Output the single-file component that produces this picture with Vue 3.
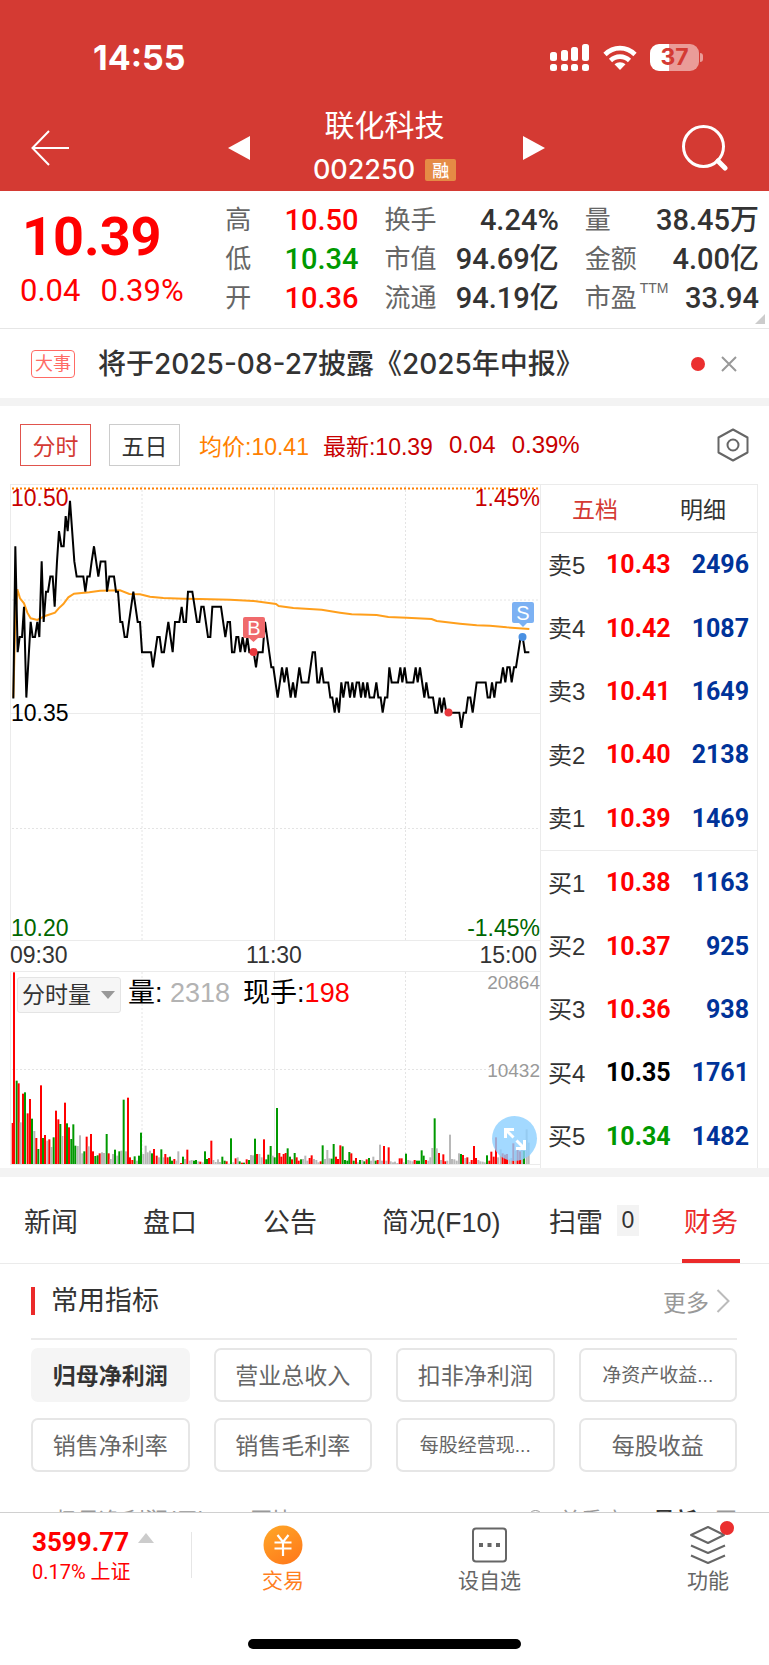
<template>
  <div class="page">
    <header class="header">
      <div class="status-bar">
        <span class="status-time">14:55</span>
        <div class="status-icons">
          <svg width="40" height="28" viewBox="0 0 40 28" fill="#fff">
            <rect x="0" y="8" width="7" height="9" rx="2.5" />
            <rect x="11" y="6" width="7" height="11" rx="2.5" />
            <rect x="21" y="3" width="7" height="14" rx="2.5" />
            <rect x="32" y="0" width="7" height="17" rx="2.5" />
            <rect x="0" y="20" width="7" height="7" rx="2.5" />
            <rect x="11" y="20" width="7" height="7" rx="2.5" />
            <rect x="21" y="20" width="7" height="7" rx="2.5" />
            <rect x="32" y="20" width="7" height="7" rx="2.5" />
          </svg>
          <svg width="34" height="26" viewBox="0 0 34 26" fill="none" stroke="#fff" stroke-width="4.6">
            <path d="M2 9.5C10.500 1 23.500 1 32 9.500" />
            <path d="M7.500 15.500C13 10.300 21 10.300 26.500 15.500" />
            <path d="M17 25L11.500 19.300C14.600 16.600 19.400 16.600 22.500 19.300Z" fill="#fff" stroke="none" />
          </svg>
          <div class="battery">
            <span class="battery-text">37</span>
          </div>
        </div>
      </div>
      <nav class="nav">
        <button class="icon-button" aria-label="返回">
          <svg width="38" height="36" viewBox="0 0 38 36" fill="none" stroke="#fff" stroke-width="2">
            <path d="M18 1L1.500 18L18 35M1.500 18H38" />
          </svg>
        </button>
        <div class="nav-center">
          <button class="icon-button" aria-label="上一只">
            <svg width="22" height="24" viewBox="0 0 22 24"><path d="M0 12L22 0V24Z" fill="#fff" /></svg>
          </button>
          <div class="nav-title">
            <h1 class="stock-name">联化科技</h1>
            <div class="stock-code">002250<span class="margin-tag">融</span></div>
          </div>
          <button class="icon-button" aria-label="下一只">
            <svg width="22" height="24" viewBox="0 0 22 24"><path d="M22 12L0 0V24Z" fill="#fff" /></svg>
          </button>
        </div>
        <button class="icon-button nav-search" aria-label="搜索">
          <svg width="46" height="46" viewBox="0 0 46 46" fill="none" stroke="#fff">
            <circle cx="21.500" cy="21.500" r="20" stroke-width="3" />
            <path d="M36 36L43 43" stroke-width="5" stroke-linecap="round" />
          </svg>
        </button>
      </nav>
    </header>

    <section class="quote">
      <div class="quote-main">
        <div class="quote-price">10.39</div>
        <div class="quote-change"><span>0.04</span><span>0.39%</span></div>
      </div>
      <dl v-for="(col, i) in quoteColumns" :key="i" class="quote-column">
        <div v-for="item in col" :key="item.label" class="quote-item">
          <dt>{{ item.label }}<sup v-if="item.sup">{{ item.sup }}</sup></dt>
          <dd :class="item.color">{{ item.value }}</dd>
        </div>
      </dl>
      <i class="quote-corner"></i>
    </section>

    <section class="notice">
      <span class="notice-tag">大事</span>
      <a href="#" class="notice-text">将于2025-08-27披露《2025年中报》</a>
      <i class="notice-dot"></i>
      <button class="icon-button" aria-label="关闭">
        <svg width="16" height="16" viewBox="0 0 16 16" stroke="#999" stroke-width="2">
          <path d="M1 1L15 15M15 1L1 15" />
        </svg>
      </button>
    </section>

    <section class="toolbar">
      <div class="periods">
        <button class="active">分时</button>
        <button>五日</button>
      </div>
      <span class="toolbar-avg">均价:10.41</span>
      <span class="toolbar-last">最新:10.39</span>
      <span class="toolbar-last toolbar-change">0.04</span>
      <span class="toolbar-last toolbar-change">0.39%</span>
      <button class="icon-button toolbar-setting" aria-label="设置">
        <svg width="32" height="34" viewBox="0 0 32 34" fill="none" stroke="#666" stroke-width="2">
          <path d="M16 1.500L30.500 9.500V24.500L16 32.500L1.500 24.500V9.500Z" stroke-linejoin="round" />
          <circle cx="16" cy="17" r="5.500" />
        </svg>
      </button>
    </section>

    <section class="market">
      <div class="chart">
        <svg class="chart-svg" viewBox="0 0 530 684">
          <g class="grid-line">
            <path d="M0.500 0V456.500H530M0 0.500H530M264.500 0V456M0 229.500H530" />
            <path d="M0.500 680.500V487.500H530M264.500 488V680M0 680.500H530" />
            <path class="dotted" d="M132 2V456M395.500 2V456M2 116H530M2 344.500H530" />
            <path class="dotted" d="M132 488V680M395.500 488V680M2 585.500H530" />
          </g>
          <path class="limit-line" d="M2 4.500H530" />
          <rect
            v-for="bar in bars"
            :key="bar.x"
            :class="'bar-' + bar.type"
            :x="bar.x"
            :y="680 - bar.h"
            width="2"
            :height="bar.h"
          />
          <polyline class="avg-line" :points="avgLine" />
          <polyline class="price-line" :points="priceLine" />

          <circle cx="243.500" cy="168" r="4" fill="#e8383d" />
          <path d="M235 133H253a2 2 0 0 1 2 2V152a2 2 0 0 1-2 2H248L243.500 158L239 154H235a2 2 0 0 1-2-2V135a2 2 0 0 1 2-2Z" fill="#f06a6c" />
          <text class="marker-text" x="244" y="151">B</text>
          <circle cx="438.500" cy="228.500" r="4" fill="#e8383d" />
          <circle cx="512.500" cy="153" r="4" fill="#4a90e2" />
          <path d="M504 118H522a2 2 0 0 1 2 2V137a2 2 0 0 1-2 2H517L513 143L509 139H504a2 2 0 0 1-2-2V120a2 2 0 0 1 2-2Z" fill="#7cb1f3" />
          <text class="marker-text" x="513" y="136">S</text>

          <text class="axis up" x="1" y="22">10.50</text>
          <text class="axis up end" x="530" y="22">1.45%</text>
          <text class="axis flat" x="1" y="237">10.35</text>
          <text class="axis down" x="1" y="452">10.20</text>
          <text class="axis down end" x="530" y="452">-1.45%</text>
          <text class="axis time" x="0" y="479">09:30</text>
          <text class="axis time middle" x="264" y="479">11:30</text>
          <text class="axis time end" x="527" y="479">15:00</text>
          <text class="volume-axis end" x="530" y="505">20864</text>
          <text class="volume-axis end" x="530" y="593">10432</text>
        </svg>
        <div class="volume-head">
          <div class="volume-select">
            <select aria-label="副图指标">
              <option>分时量</option>
            </select>
            <i class="select-arrow"></i>
          </div>
          <span class="volume-text">量: <em>2318</em></span>
          <span class="volume-text">现手:<b>198</b></span>
        </div>
        <button class="expand" aria-label="放大">
          <svg width="24" height="24" viewBox="0 0 24 24" fill="none" stroke="#fff" stroke-width="3">
            <path d="M2.500 11V2.500H11M3 3L10.500 10.500M21.500 13V21.500H13M21 21L13.500 13.500" />
          </svg>
        </button>
      </div>
      <div class="book">
        <div class="book-tabs">
          <button class="active">五档</button>
          <button>明细</button>
        </div>
        <table class="book-table">
          <tbody v-for="(group, g) in book" :key="g">
            <tr v-for="row in group" :key="row[0]">
              <th scope="row">{{ row[0] }}</th>
              <td :class="row[3]">{{ row[1] }}</td>
              <td class="book-volume">{{ row[2] }}</td>
            </tr>
          </tbody>
        </table>
      </div>
    </section>

    <nav class="tabs">
      <a v-for="tab in tabs" :key="tab.name" href="#" :class="{ active: tab.active }">
        {{ tab.name }}<span v-if="tab.badge" class="tab-badge">{{ tab.badge }}</span>
      </a>
    </nav>

    <section class="finance">
      <div class="finance-head">
        <h2>常用指标</h2>
        <a href="#" class="more">更多
          <svg width="14" height="24" viewBox="0 0 14 24" fill="none" stroke="#bbb" stroke-width="2">
            <path d="M1.500 1L12.500 12L1.500 23" />
          </svg>
        </a>
      </div>
      <div class="indicators">
        <button
          v-for="item in indicators"
          :key="item"
          :class="{ active: item === '归母净利润', small: item.endsWith('...') }"
        >{{ item }}</button>
      </div>
      <div class="finance-row">
        <span class="row-name">归母净利润(元)</span>
        <span class="row-compare">同比</span>
        <span class="row-radio"></span>
        <span class="row-season">单季度</span>
        <strong>最新</strong>
        <span class="row-last">同</span>
      </div>
    </section>

    <footer class="footer">
      <div class="footer-bar">
        <div class="index">
          <div class="index-value">3599.77<i class="index-arrow"></i></div>
          <div class="index-name">0.17% 上证</div>
        </div>
        <button class="action trade">
          <svg width="40" height="40" viewBox="0 0 40 40">
            <defs>
              <linearGradient id="coin" x1="0" y1="0" x2="0.600" y2="1">
                <stop offset="0" stop-color="#ffa827" />
                <stop offset="1" stop-color="#ff7d1c" />
              </linearGradient>
            </defs>
            <circle cx="20" cy="20" r="19.500" fill="url(#coin)" />
            <path d="M14.500 10L20 17L25.500 10M11.500 17.500H28.500M11.500 23.500H28.500M20 17V31" fill="none" stroke="#fff" stroke-width="2.200" />
          </svg>
          <span>交易</span>
        </button>
        <button class="action">
          <svg width="40" height="40" viewBox="0 0 40 40">
            <rect x="3" y="3.500" width="33" height="33" rx="3" fill="none" stroke="#666" stroke-width="2" />
            <path d="M9 18h4v4H9zM17.500 18h4v4h-4zM26 18h4v4h-4z" fill="#666" />
          </svg>
          <span>设自选</span>
        </button>
        <button class="action more-action">
          <svg width="40" height="40" viewBox="0 0 40 40" fill="none" stroke="#666" stroke-width="2" stroke-linejoin="round">
            <path d="M20 2L36 10L20 18L3 10Z" />
            <path d="M3 20.500L20 28L37 20.500M3 30.500L20 38L37 30.500" />
          </svg>
          <i class="action-dot"></i>
          <span>功能</span>
        </button>
      </div>
      <div class="home-indicator"></div>
    </footer>
  </div>
</template>

<script setup>
const quoteColumns = [
  [
    { label: '高', value: '10.50', color: 'red' },
    { label: '低', value: '10.34', color: 'green' },
    { label: '开', value: '10.36', color: 'red' }
  ],
  [
    { label: '换手', value: '4.24%' },
    { label: '市值', value: '94.69亿' },
    { label: '流通', value: '94.19亿' }
  ],
  [
    { label: '量', value: '38.45万' },
    { label: '金额', value: '4.00亿' },
    { label: '市盈', value: '33.94', sup: 'TTM' }
  ]
]

const book = [
  [
    ['卖5', '10.43', 2496, 'red'],
    ['卖4', '10.42', 1087, 'red'],
    ['卖3', '10.41', 1649, 'red'],
    ['卖2', '10.40', 2138, 'red'],
    ['卖1', '10.39', 1469, 'red']
  ],
  [
    ['买1', '10.38', 1163, 'red'],
    ['买2', '10.37', 925, 'red'],
    ['买3', '10.36', 938, 'red'],
    ['买4', '10.35', 1761, 'black'],
    ['买5', '10.34', 1482, 'green']
  ]
]

const tabs = [
  { name: '新闻' },
  { name: '盘口' },
  { name: '公告' },
  { name: '简况(F10)' },
  { name: '扫雷', badge: '0' },
  { name: '财务', active: true }
]

const indicators = [
  '归母净利润', '营业总收入', '扣非净利润', '净资产收益...',
  '销售净利率', '销售毛利率', '每股经营现...', '每股收益'
]

// time position, cents above or below the previous close (10.35)
const prices = `37,1 40,1 46,11 53,4 59,5 66,5 72,7 79,1 92,6 98,5 105,5 112,6 118,5 125,10 131,6 138,8 144,8
  151,9 158,9 164,7 171,10 177,12 184,11 191,11 197,13 203,12 210,14 223,10 230,9 250,9 256,8 262,9 269,9 275,10
  282,11 295,9 302,10 316,10 321,8 328,9 342,9 348,8 354,8 361,6 367,6 374,5 381,5 387,6 400,8 413,6 420,6 426,4
  453,4 459,3 472,5 479,5 485,4 492,4 505,6 518,4 525,6 538,6 545,7 551,6 558,6 564,8 577,8 591,6 598,6 604,7
  611,7 624,5 631,5 637,7 663,7 676,5 683,6 690,6 696,4 703,4 709,5 715,5 721,4 728,5 735,4 742,5 748,4 761,4
  768,3 774,4 788,4 795,6 814,3 820,3 833,1 846,3 853,2 860,3 872,1 879,2 886,1 898,3 905,2 925,2 938,4 945,4
  952,2 958,2 965,3 971,2 985,2 991,1 997,1 1004,0 1010,1 1017,0 1024,2 1030,1 1037,2 1044,2 1050,1 1057,2
  1063,1 1070,2 1077,2 1083,1 1089,2 1096,1 1102,2 1109,1 1122,1 1129,2 1135,1 1142,1 1148,0 1155,1 1162,1
  1168,3 1175,2 1194,2 1201,3 1207,2 1214,3 1220,2 1240,2 1247,3 1253,2 1260,3 1273,1 1279,2 1286,1 1299,1
  1306,0 1312,0 1319,1 1325,0 1332,1 1339,0 1378,0 1384,-1 1391,0 1398,0 1404,1 1411,1 1418,0 1430,2 1457,2
  1463,1 1470,1 1476,2 1483,1 1489,2 1502,2 1509,3 1516,2 1522,3 1529,3 1535,2 1542,3 1548,3 1562,5 1568,5
  1575,4 1588,4`

const averages = `40,653 46,420 52,328 60,355 72,370 82,398 92,415 112,420 135,408 165,398 176,385 190,372 205,352
  222,341 268,337 300,332 360,331 388,342 420,343 450,350 490,354 550,356 600,357 690,359 760,363 828,372 836,378
  880,384 965,389 1020,398 1055,403 1130,405 1165,411 1220,413 1295,417 1310,423 1380,431 1430,436 1470,437
  1520,442 1588,447`

// time position, r up / g down / n flat, volume
const volumes = `38r123 42r575 50g250 56r242 62n125 69r211 75g215 83r152 90r195 96g136 103n99 109r78 115g45 123r236
  129g78 135r87 142n70 148r74 154n51 161g80 168r160 175r134 181g120 187n84 195r184 201g122 207r110 214g75 220g119
  226g55 233n54 240n86 247n32 253g38 260r82 266n53 273r90 279r38 286g24 293g26 299r32 306n35 312n33 320g90 326r32
  332n15 339n30 345g43 352n25 358g38 364n40 371g193 378n38 384r199 390r20 397r12 404g23 411n10 417g25 423g94
  430n30 437n55 443n35 450n40 456g32 462r45 470r25 477n20 484g44 490n20 496r30 503r20 510g22 516g10 523r15 529n10
  535n38 543r3 549g22 555n15 562r43 569n10 575n12 582g10 588g12 595n8 601r7 608n5 615g38 621g15 627r18 634r70
  640n12 647n6 654n14 660n6 667g22 674g10 680r8 686n1 693g77 700n5 707r17 713n20 719g8 726r4 732g4 740r14 747g12
  753n27 759n26 765g76 771r30 778n30 785n20 792r74 799g14 805g28 812g54 818n25 824g20 831g168 838r33 844r22
  851r30 857r33 863g47 870g22 876r14 884g33 890r20 896r10 903g14 909n15 916n25 922n10 929r18 935r26 942n15 949n12
  955n5 962r8 968g56 975n15 982n42 988n17 995g16 1001g60 1008r22 1014r15 1021r56 1028g53 1035g12 1042g10 1048g36
  1054r32 1061g10 1068r18 1074n5 1080g12 1087n12 1093g8 1100r14 1107g18 1113n10 1120n22 1127g10 1133r12 1140n58
  1146n10 1152r54 1159n10 1166r50 1172n8 1179n5 1185n7 1192n3 1199r17 1205r17 1211n5 1218g31 1225n12 1231n10
  1238n8 1244r12 1251g10 1257g10 1265g41 1271g25 1278r12 1285n10 1291n20 1297n48 1304g137 1310n47 1317r33 1323n12
  1330r29 1336r8 1342n10 1350n88 1356n15 1363n14 1370n10 1377n32 1383g30 1389r27 1396n18 1402r20 1408n6 1415r12
  1422r54 1428r18 1435n12 1441n8 1448n7 1454n5 1461g26 1468r10 1474r37 1481r22 1488r80 1494n20 1502n44 1508r32
  1515r28 1521r30 1528n14 1534n18 1540r62 1547n40 1553r50 1560r38 1566n42 1572g40 1580n104 1586n64`

const parse = (text) => text.trim().split(/\s+/).map((p) => p.split(',').map(Number))
const toX = (t) => t / 3 - 10

const priceLine = parse(prices).map(([t, cents]) => `${toX(t)},${228.7 - cents * 15.13}`).join(' ')
const avgLine = parse(averages).map(([t, y]) => `${toX(t)},${y / 3 - 4}`).join(' ')
const bars = volumes.trim().split(/\s+/).map((item) => {
  const [, t, type, h] = item.match(/(\d+)([rgn])(\d+)/)
  return { x: toX(t) - 1, type, h: h / 3 }
})
</script>

<style>
body {
  margin: 0;
  background: #fff;
}
</style>

<style scoped>
.page {
  color: #333;
  font-family: "Liberation Sans", "Noto Sans CJK SC", sans-serif;
  overflow: hidden;
}

button,
select {
  margin: 0;
  padding: 0;
  border: 0;
  background: none;
  color: inherit;
  font: inherit;
}

a {
  color: inherit;
  text-decoration: none;
}

svg {
  display: block;
}

.icon-button {
  display: flex;
  flex: none;
}

.red {
  color: #ff0000;
}

.green {
  color: #009900;
}

.black {
  color: #000;
}

/* header */
.header {
  height: 191px;
  background: #d43a33;
  color: #fff;
}

.status-bar {
  display: flex;
  justify-content: space-between;
  align-items: center;
  box-sizing: border-box;
  height: 103px;
  padding: 22px 70px 10px 93px;
}

.status-time {
  font-family: Inter, sans-serif;
  font-size: 34px;
  font-weight: 700;
}

.status-icons {
  display: flex;
  align-items: center;
  gap: 13px;
}

.battery {
  position: relative;
  width: 49px;
  height: 27px;
  border-radius: 9px;
  background: linear-gradient(90deg, #fff 38%, #ea9c98 38%);
  color: #d43a33;
  font-family: Inter, sans-serif;
  font-size: 23px;
  font-weight: 700;
  line-height: 27px;
  text-align: center;
}

.battery::after {
  content: "";
  position: absolute;
  top: 9px;
  right: -4px;
  width: 3px;
  height: 9px;
  border-radius: 0 3px 3px 0;
  background: #ea9c98;
}

.nav {
  display: grid;
  grid-template-columns: 196fr 317fr 182fr;
  align-items: center;
  height: 89px;
  padding: 0 41px 0 31px;
}

.nav-center {
  display: flex;
  justify-content: space-between;
  align-items: center;
}

.nav-title {
  margin-right: 4px;
  text-align: center;
}

.stock-name {
  margin: 0;
  font-size: 30px;
  font-weight: 400;
  line-height: 44px;
}

.stock-code {
  display: flex;
  align-items: center;
  gap: 10px;
  font-family: Inter, sans-serif;
  font-size: 27px;
  font-weight: 500;
  line-height: 43px;
}

.margin-tag {
  width: 31px;
  border-radius: 2px;
  background: #e58b45;
  font-family: "Noto Sans CJK SC", sans-serif;
  font-size: 17px;
  line-height: 22px;
}

.nav-search {
  justify-self: end;
}

/* quote */
.quote {
  position: relative;
  display: grid;
  grid-template-columns: 179fr 133fr 174fr 174fr;
  column-gap: 26px;
  padding: 10px 10px 10px 20px;
  border-bottom: 1px solid #e6e6e6;
  font-family: Roboto, "Noto Sans CJK SC", sans-serif;
}

.quote-main {
  color: #ff0000;
  white-space: nowrap;
}

.quote-price {
  padding-left: 2px;
  font-size: 54px;
  font-weight: 700;
  line-height: 72px;
}

.quote-change {
  display: flex;
  gap: 20px;
  font-size: 31px;
  line-height: 36px;
}

.quote-column {
  margin: 0;
}

.quote-item {
  display: flex;
  justify-content: space-between;
  height: 39px;
  line-height: 39px;
  white-space: nowrap;
}

.quote-item dt {
  color: #666;
  font-size: 26px;
}

.quote-item sup {
  margin-left: 3px;
  font-family: "Liberation Sans", sans-serif;
  font-size: 14px;
  line-height: 1;
  vertical-align: 14px;
}

.quote-item dd {
  margin: 0;
  font-size: 29px;
  font-weight: 500;
}

.quote-corner {
  position: absolute;
  right: 4px;
  bottom: 4px;
  border-left: 10px solid transparent;
  border-bottom: 10px solid #ccc;
}

/* notice */
.notice {
  display: flex;
  align-items: center;
  height: 69px;
  padding: 0 32px 0 31px;
  border-bottom: 8px solid #f3f3f3;
}

.notice-tag {
  width: 42px;
  border: 1px solid #ff6b65;
  border-radius: 4px;
  color: #ff6b65;
  font-size: 18px;
  line-height: 26px;
  text-align: center;
}

.notice-text {
  flex: 1;
  margin-left: 23px;
  font-family: Inter, "Noto Sans CJK SC", sans-serif;
  font-size: 28px;
  font-weight: 500;
  line-height: 36px;
}

.notice-dot {
  width: 14px;
  height: 14px;
  margin-right: 16px;
  border-radius: 50%;
  background: #eb2f2f;
}

/* toolbar */
.toolbar {
  display: flex;
  align-items: center;
  gap: 14px;
  height: 78px;
  padding: 0 20px;
  font-size: 23px;
  white-space: nowrap;
}

.periods {
  display: flex;
  gap: 18px;
  margin-right: 5px;
}

.periods button {
  width: 71px;
  height: 42px;
  border: 1px solid #ccc;
}

.periods .active {
  border-color: #e0534d;
  color: #d43a33;
}

.toolbar-avg {
  color: #ff7f00;
}

.toolbar-last {
  color: #c80000;
}

.toolbar-change {
  padding-left: 2px;
  font-size: 24px;
}

.toolbar-setting {
  margin-left: auto;
}

/* chart and order book */
.market {
  display: grid;
  grid-template-columns: 530fr 218fr;
  padding: 0 11px 0 10px;
  border-bottom: 9px solid #f3f3f3;
}

.chart {
  position: relative;
}

.chart-svg {
  width: 100%;
  height: auto;
}

.grid-line {
  fill: none;
  stroke: #ebebeb;
}

.dotted {
  stroke: #e4e4e4;
  stroke-dasharray: 2 2;
}

.limit-line {
  stroke: #ff7f00;
  stroke-width: 2;
  stroke-dasharray: 2 2;
}

.price-line {
  fill: none;
  stroke: #000;
  stroke-width: 2;
}

.avg-line {
  fill: none;
  stroke: #ff9f1c;
  stroke-width: 2;
}

.bar-r {
  fill: #ff0000;
}

.bar-g {
  fill: #009900;
}

.bar-n {
  fill: #b8b8b8;
}

.marker-text {
  fill: #fff;
  font-size: 20px;
  text-anchor: middle;
}

.axis {
  font-size: 23px;
}

.up {
  fill: #c80000;
}

.down {
  fill: #006600;
}

.flat {
  fill: #000;
}

.time {
  fill: #333;
}

.end {
  text-anchor: end;
}

.middle {
  text-anchor: middle;
}

.volume-axis {
  fill: #999;
  font-size: 19px;
}

.volume-head {
  position: absolute;
  top: 493px;
  left: 7px;
  display: flex;
  align-items: flex-start;
  gap: 7px;
}

.volume-select {
  position: relative;
}

.volume-select select {
  width: 104px;
  height: 36px;
  padding-left: 4px;
  border: 1px solid #e4e4e4;
  border-radius: 3px;
  background: #f6f6f6;
  font-size: 23px;
  appearance: none;
}

.select-arrow {
  position: absolute;
  top: 14px;
  right: 6px;
  border: 7px solid transparent;
  border-top: 8px solid #999;
  border-bottom: 0;
  pointer-events: none;
}

.volume-text {
  margin-right: 6px;
  color: #000;
  font-size: 27px;
  line-height: 32px;
}

.volume-text em {
  color: #b3b3b3;
  font-style: normal;
}

.volume-text b {
  color: #ff0000;
  font-weight: 400;
}

.expand {
  position: absolute;
  right: 3px;
  bottom: 7px;
  display: flex;
  justify-content: center;
  align-items: center;
  width: 45px;
  height: 45px;
  border-radius: 50%;
  background: rgba(140, 207, 255, 0.8);
}

.book {
  display: grid;
  grid-template-rows: 48px 1fr;
  border: 1px solid #ebebeb;
  border-bottom: 0;
}

.book-tabs {
  display: grid;
  grid-template-columns: 1fr 1fr;
  border-bottom: 1px solid #e6e6e6;
  font-size: 23px;
}

.book-tabs button {
  padding-bottom: 2px;
}

.book-tabs .active {
  color: #d43a33;
}

.book-table {
  width: 100%;
  height: 100%;
  border-collapse: collapse;
}

.book-table tbody + tbody {
  border-top: 1px solid #ebebeb;
}

.book-table th,
.book-table td {
  height: 58px;
  padding: 0;
}

.book-table th {
  width: 58px;
  padding: 0 0 3px 7px;
  font-size: 24px;
  font-weight: 400;
  text-align: left;
}

.book-table td {
  font-family: Roboto, sans-serif;
  font-size: 25px;
  font-weight: 700;
}

.book-table .book-volume {
  padding-right: 8px;
  color: #003399;
  text-align: right;
}

/* tabs */
.tabs {
  display: grid;
  grid-template-columns: 119fr 120fr 119fr 167fr 135fr 85fr;
  height: 86px;
  padding-left: 24px;
  border-bottom: 1px solid #ebebeb;
  font-size: 27px;
  white-space: nowrap;
}

.tabs a {
  position: relative;
  justify-self: start;
  display: flex;
  align-items: center;
}

.tabs .active {
  color: #eb2a2a;
}

.tabs .active::after {
  content: "";
  position: absolute;
  right: -2px;
  bottom: 0;
  left: -2px;
  height: 4px;
  background: #eb2a2a;
}

.tab-badge {
  width: 22px;
  margin-left: 14px;
  background: #f3f3f3;
  font-size: 23px;
  line-height: 31px;
  text-align: center;
}

/* finance */
.finance {
  padding: 0 32px 0 31px;
}

.finance-head {
  display: flex;
  justify-content: space-between;
  align-items: center;
  height: 74px;
  border-bottom: 2px solid #ebebeb;
}

.finance-head h2 {
  margin: 0;
  padding-left: 16px;
  border-left: 4px solid #eb2a2a;
  font-size: 27px;
  font-weight: 400;
  line-height: 28px;
}

.more {
  display: flex;
  align-items: center;
  gap: 7px;
  margin-right: 7px;
  color: #999;
  font-size: 23px;
}

.indicators {
  display: grid;
  grid-template-columns: repeat(4, 1fr);
  gap: 16px 24px;
  margin-top: 8px;
}

.indicators button {
  height: 54px;
  padding-bottom: 3px;
  border: 2px solid #e6e6e6;
  border-radius: 7px;
  color: #666;
  font-size: 23px;
  white-space: nowrap;
}

.indicators .small {
  font-size: 19px;
}

.indicators .active {
  border-color: #f5f5f5;
  background: #f5f5f5;
  color: #333;
  font-weight: 700;
}

/* only the top edge shows above the footer */
.finance-row {
  display: flex;
  align-items: flex-start;
  height: 2px;
  padding: 38px 0 0 22px;
  overflow: hidden;
  color: #999;
  font-size: 22px;
  line-height: 22px;
}

.row-name {
  font-size: 23px;
}

.row-compare {
  margin-left: 44px;
}

.row-radio {
  width: 13px;
  height: 13px;
  margin-right: 16px;
  margin-left: auto;
  border: 1px solid #999;
  border-radius: 50%;
}

.finance-row strong {
  margin: 0 18px 0 28px;
  color: #333;
}

/* footer */
.footer {
  border-top: 1px solid #d0d0d0;
  background: #fff;
}

.footer-bar {
  display: grid;
  grid-template-columns: 160fr 182fr 231fr 124fr;
  box-sizing: border-box;
  height: 126px;
  padding: 12px 40px 0 32px;
}

.index {
  height: 46px;
  margin-top: 7px;
  border-right: 1px solid #e6e6e6;
  color: #ff0000;
  font-family: Roboto, "Noto Sans CJK SC", sans-serif;
  white-space: nowrap;
}

.index-value {
  display: flex;
  align-items: center;
  gap: 9px;
  font-size: 26px;
  font-weight: 700;
  line-height: 20px;
}

.index-arrow {
  margin-bottom: 9px;
  border: 8px solid transparent;
  border-top: 0;
  border-bottom: 10px solid #ccc;
}

.index-name {
  margin-top: 5px;
  font-size: 20px;
  line-height: 30px;
}

.action {
  position: relative;
  display: flex;
  flex-direction: column;
  align-items: center;
  align-self: start;
  justify-self: center;
  gap: 2px;
  color: #666;
  font-size: 21px;
  line-height: 28px;
}

.more-action {
  justify-self: end;
}

.trade {
  color: #ff7f1e;
}

.action-dot {
  position: absolute;
  top: -4px;
  right: -5px;
  width: 14px;
  height: 14px;
  border-radius: 50%;
  background: #eb2f2f;
}

.home-indicator {
  width: 273px;
  height: 10px;
  margin: 0 auto 16px;
  border-radius: 5px;
  background: #000;
}
</style>
